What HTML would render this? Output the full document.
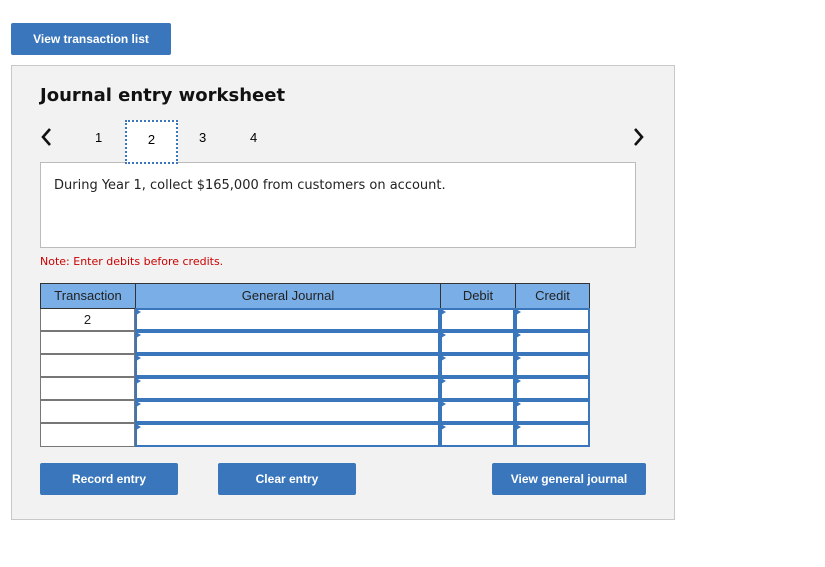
<!DOCTYPE html>
<html><head><style>
*{box-sizing:border-box;margin:0;padding:0}
body{width:825px;height:567px;background:#fff;position:relative;font-family:"Liberation Sans",Arial,sans-serif;overflow:hidden}
.btn{position:absolute;background:#3a76bb;color:#fff;font-weight:bold;font-size:12px;text-align:center;border-radius:2px}
.abs{position:absolute}
.cell{position:absolute;background:#fff}
.inp{position:absolute;background:#fff;border:2px solid #3a76bb}
.inp:before{content:"";position:absolute;left:-1px;top:-1px;border-left:6px solid #3a76bb;border-top:3.5px solid transparent;border-bottom:3.5px solid transparent;border-left-width:5px}
.th{position:absolute;background:#7aaee6;border:1px solid #333;font-size:13px;color:#222;text-align:center;line-height:24px}
</style></head><body>
<div class="btn" style="left:11px;top:23px;width:160px;height:32px;line-height:32px">View transaction list</div>
<div class="abs" style="left:11px;top:65px;width:664px;height:455px;background:#f2f2f2;border:1px solid #c8c8c8"></div>
<div class="abs" style="left:40px;top:85px;font:bold 18px 'DejaVu Sans',Verdana,sans-serif;color:#111">Journal entry worksheet</div>
<svg class="abs" style="left:40px;top:127px" width="14" height="20"><path d="M10 2 L3 10 L10 18" stroke="#111" stroke-width="2.6" fill="none"/></svg>
<svg class="abs" style="left:631px;top:127px" width="14" height="20"><path d="M4 2 L11 10 L4 18" stroke="#111" stroke-width="2.6" fill="none"/></svg>
<div class="abs" style="left:95px;top:130px;font-size:13px">1</div>
<div class="abs" style="left:40px;top:162px;width:596px;height:86px;background:#fff;border:1px solid #bbb"></div>
<div class="abs" style="left:125px;top:120px;width:53px;height:44px;background:#fff;border:2px dotted #3a76bb;text-align:center;font-size:13px;line-height:36px">2</div>
<div class="abs" style="left:199px;top:130px;font-size:13px">3</div>
<div class="abs" style="left:250px;top:130px;font-size:13px">4</div>
<div class="abs" style="left:54px;top:178px;font:13px 'DejaVu Sans',Verdana,sans-serif;color:#222">During Year 1, collect $165,000 from customers on account.</div>
<div class="abs" style="left:40px;top:255px;font:11px 'DejaVu Sans',Verdana,sans-serif;color:#c00">Note: Enter debits before credits.</div>
<div class="abs" style="left:40px;top:283px;width:550px;height:164px;background:#777"></div>
<div class="th" style="left:40px;top:283px;width:96px;height:26px">Transaction</div>
<div class="th" style="left:135px;top:283px;width:306px;height:26px">General Journal</div>
<div class="th" style="left:440px;top:283px;width:76px;height:26px">Debit</div>
<div class="th" style="left:515px;top:283px;width:75px;height:26px">Credit</div>
<div class="cell" style="left:41px;top:309px;width:93px;height:21px;text-align:center;font-size:13px;line-height:22px;color:#222">2</div>
<div class="cell" style="left:41px;top:332px;width:93px;height:21px"></div>
<div class="cell" style="left:41px;top:355px;width:93px;height:21px"></div>
<div class="cell" style="left:41px;top:378px;width:93px;height:21px"></div>
<div class="cell" style="left:41px;top:401px;width:93px;height:21px"></div>
<div class="cell" style="left:41px;top:424px;width:93px;height:22px"></div>
<div class="inp" style="left:135px;top:308px;width:305px;height:23px"></div>
<div class="inp" style="left:440px;top:308px;width:75px;height:23px"></div>
<div class="inp" style="left:515px;top:308px;width:75px;height:23px"></div>
<div class="inp" style="left:135px;top:331px;width:305px;height:23px"></div>
<div class="inp" style="left:440px;top:331px;width:75px;height:23px"></div>
<div class="inp" style="left:515px;top:331px;width:75px;height:23px"></div>
<div class="inp" style="left:135px;top:354px;width:305px;height:23px"></div>
<div class="inp" style="left:440px;top:354px;width:75px;height:23px"></div>
<div class="inp" style="left:515px;top:354px;width:75px;height:23px"></div>
<div class="inp" style="left:135px;top:377px;width:305px;height:23px"></div>
<div class="inp" style="left:440px;top:377px;width:75px;height:23px"></div>
<div class="inp" style="left:515px;top:377px;width:75px;height:23px"></div>
<div class="inp" style="left:135px;top:400px;width:305px;height:23px"></div>
<div class="inp" style="left:440px;top:400px;width:75px;height:23px"></div>
<div class="inp" style="left:515px;top:400px;width:75px;height:23px"></div>
<div class="inp" style="left:135px;top:423px;width:305px;height:24px"></div>
<div class="inp" style="left:440px;top:423px;width:75px;height:24px"></div>
<div class="inp" style="left:515px;top:423px;width:75px;height:24px"></div>
<div class="btn" style="left:40px;top:463px;width:138px;height:32px;line-height:32px">Record entry</div>
<div class="btn" style="left:218px;top:463px;width:138px;height:32px;line-height:32px">Clear entry</div>
<div class="btn" style="left:492px;top:463px;width:154px;height:32px;line-height:32px">View general journal</div>
</body></html>
